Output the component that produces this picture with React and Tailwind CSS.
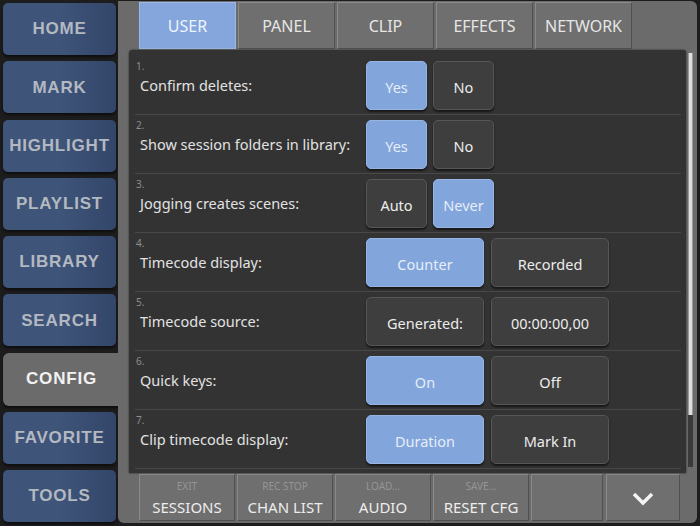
import React from 'react';

const NAV = ['HOME', 'MARK', 'HIGHLIGHT', 'PLAYLIST', 'LIBRARY', 'SEARCH', 'CONFIG', 'FAVORITE', 'TOOLS'];
const TABS = ['USER', 'PANEL', 'CLIP', 'EFFECTS', 'NETWORK'];

const SETTINGS = [
    { label: 'Confirm deletes:', wide: false, options: ['Yes', 'No'], selected: 0 },
    { label: 'Show session folders in library:', wide: false, options: ['Yes', 'No'], selected: 0 },
    { label: 'Jogging creates scenes:', wide: false, options: ['Auto', 'Never'], selected: 1 },
    { label: 'Timecode display:', wide: true, options: ['Counter', 'Recorded'], selected: 0 },
    { label: 'Timecode source:', wide: true, options: ['Generated:', '00:00:00,00'], selected: -1 },
    { label: 'Quick keys:', wide: true, options: ['On', 'Off'], selected: 0 },
    { label: 'Clip timecode display:', wide: true, options: ['Duration', 'Mark In'], selected: 0 },
];

const FOOTER = [
    { top: 'EXIT', main: 'SESSIONS', w: 'w-[96px]' },
    { top: 'REC STOP', main: 'CHAN LIST', w: 'w-[96px]' },
    { top: 'LOAD...', main: 'AUDIO', w: 'w-[96px]' },
    { top: 'SAVE...', main: 'RESET CFG', w: 'w-[96px]' },
    { top: '', main: '', w: 'w-[72px]' },
];

const font = { fontFamily: '"Noto Sans", "DejaVu Sans", sans-serif' };
const navFont = { fontFamily: '"Liberation Sans", Arial, sans-serif' };

const NavButton = ({ label }) => {
    if (label === 'CONFIG') {
        return (
            <div className="h-[53px] w-[117px] rounded-l-[6px] bg-[#6b6b6b] flex items-center justify-center text-[17px] font-bold tracking-[0.8px] text-[#f2f2f2] shadow-[0_2px_3px_rgba(0,0,0,0.6)]"
                style={navFont}>
                {label}
            </div>
        );
    }
    return (
        <div className="h-[52px] w-[113px] rounded-[5px] bg-gradient-to-r from-[#3e5479] via-[#3e5479] to-[#33466a] flex items-center justify-center text-[17px] font-bold tracking-[0.8px] text-[#b3b8c1] shadow-[0_2px_3px_rgba(0,0,0,0.6)]"
            style={navFont}>
            {label}
        </div>
    );
};

const OptionButton = ({ text, active, wide }) => (
    <div className={`${wide ? 'w-[118px]' : 'w-[61px]'} h-[49px] pt-[5px] rounded-[5px] flex items-center justify-center text-[14.5px] shadow-[0_2px_2px_rgba(0,0,0,0.55)] border ${active
        ? 'bg-[#82a5dc] border-[#96b4e4] text-[#e6edf8]'
        : 'bg-[#3e3e3e] border-[#565656] text-[#ececec]'}`}>
        {text}
    </div>
);

export default function App() {
    return (
        <div className="w-[700px] h-[526px] bg-[#1d1d1d] flex overflow-hidden" style={font}>
            {/* left navigation */}
            <div className="w-[118px] pl-[3px] pt-[3px] flex flex-col gap-[6.25px] shrink-0">
                {NAV.map(n => <NavButton key={n} label={n} />)}
            </div>

            {/* config panel */}
            <div className="mt-[1px] w-[579px] h-[522px] bg-[#6b6b6b] rounded-[6px] rounded-tl-none flex flex-col">
                <div className="flex gap-[2px] pl-[21px] pt-[1px] h-[49px]">
                    {TABS.map((t, i) => (
                        <div key={t}
                            className={`w-[97px] h-[47px] flex items-center justify-center text-[16px] border ${i === 0
                                ? 'bg-[#84a6dc] border-[#9cb9e6] text-[#eef3fb]'
                                : 'bg-[#6f6f6f] border-t-[#8a8a8a] border-l-[#8a8a8a] border-r-[#505050] border-b-[#505050] text-[#e6e6e6]'}`}>
                            {t}
                        </div>
                    ))}
                </div>

                <div className="flex">
                    <div className="ml-[11px] w-[557px] h-[423px] bg-[#333333] rounded-tl-[4px] rounded-tr-[3px] shadow-[0_0_2px_rgba(0,0,0,0.7)] pt-[6px] pl-[6px] pr-[5px] overflow-hidden">
                        {SETTINGS.map((s, i) => (
                            <div key={s.label} className="h-[59px] border-b border-[#484848] flex items-center">
                                <div className="w-[231px] self-stretch flex flex-col pt-[5px]">
                                    <div className="pl-[1px] text-[10px] leading-[10px] text-[#8e8e8e]">{i + 1}.</div>
                                    <div className="pl-[5px] mt-[4px] text-[14.5px] leading-[20px] text-[#e2e2e2]">{s.label}</div>
                                </div>
                                <div className={`flex pt-[1px] ${s.wide ? 'gap-[7px]' : 'gap-[6px]'}`}>
                                    {s.options.map((o, j) => (
                                        <OptionButton key={o} text={o} active={j === s.selected} wide={s.wide} />
                                    ))}
                                </div>
                            </div>
                        ))}
                    </div>

                    {/* scrollbar */}
                    <div className="ml-[2px] mt-[3px] w-[5px] h-[414px] bg-[#3a3a3a] flex flex-col">
                        <div className="h-[362px] bg-[#dedede] border-x border-[#9a9a9a]" />
                    </div>
                </div>

                <div className="flex gap-[2px] pl-[21px] mt-[1px]">
                    {FOOTER.map((f, i) => (
                        <div key={i}
                            className={`${f.w} h-[47px] bg-[#6f6f6f] border border-t-[#8a8a8a] border-l-[#8a8a8a] border-r-[#505050] border-b-[#505050] flex flex-col items-center pt-[4px]`}>
                            <div className="text-[10px] leading-[14px] h-[14px] text-[#959595]">{f.top}</div>
                            <div className="mt-[3px] text-[15px] leading-[22px] text-[#ededed]">{f.main}</div>
                        </div>
                    ))}
                    <div className="ml-[1px] w-[74px] h-[47px] bg-[#6f6f6f] border border-t-[#8a8a8a] border-l-[#8a8a8a] border-r-[#505050] border-b-[#505050] flex items-center justify-center pt-[2px]">
                        <svg width="22" height="14" viewBox="0 0 22 14">
                            <polyline points="2,2 11,11 20,2" fill="none" stroke="#f4f4f4" strokeWidth="3.5" strokeLinejoin="miter" />
                        </svg>
                    </div>
                </div>
            </div>
        </div>
    );
}
